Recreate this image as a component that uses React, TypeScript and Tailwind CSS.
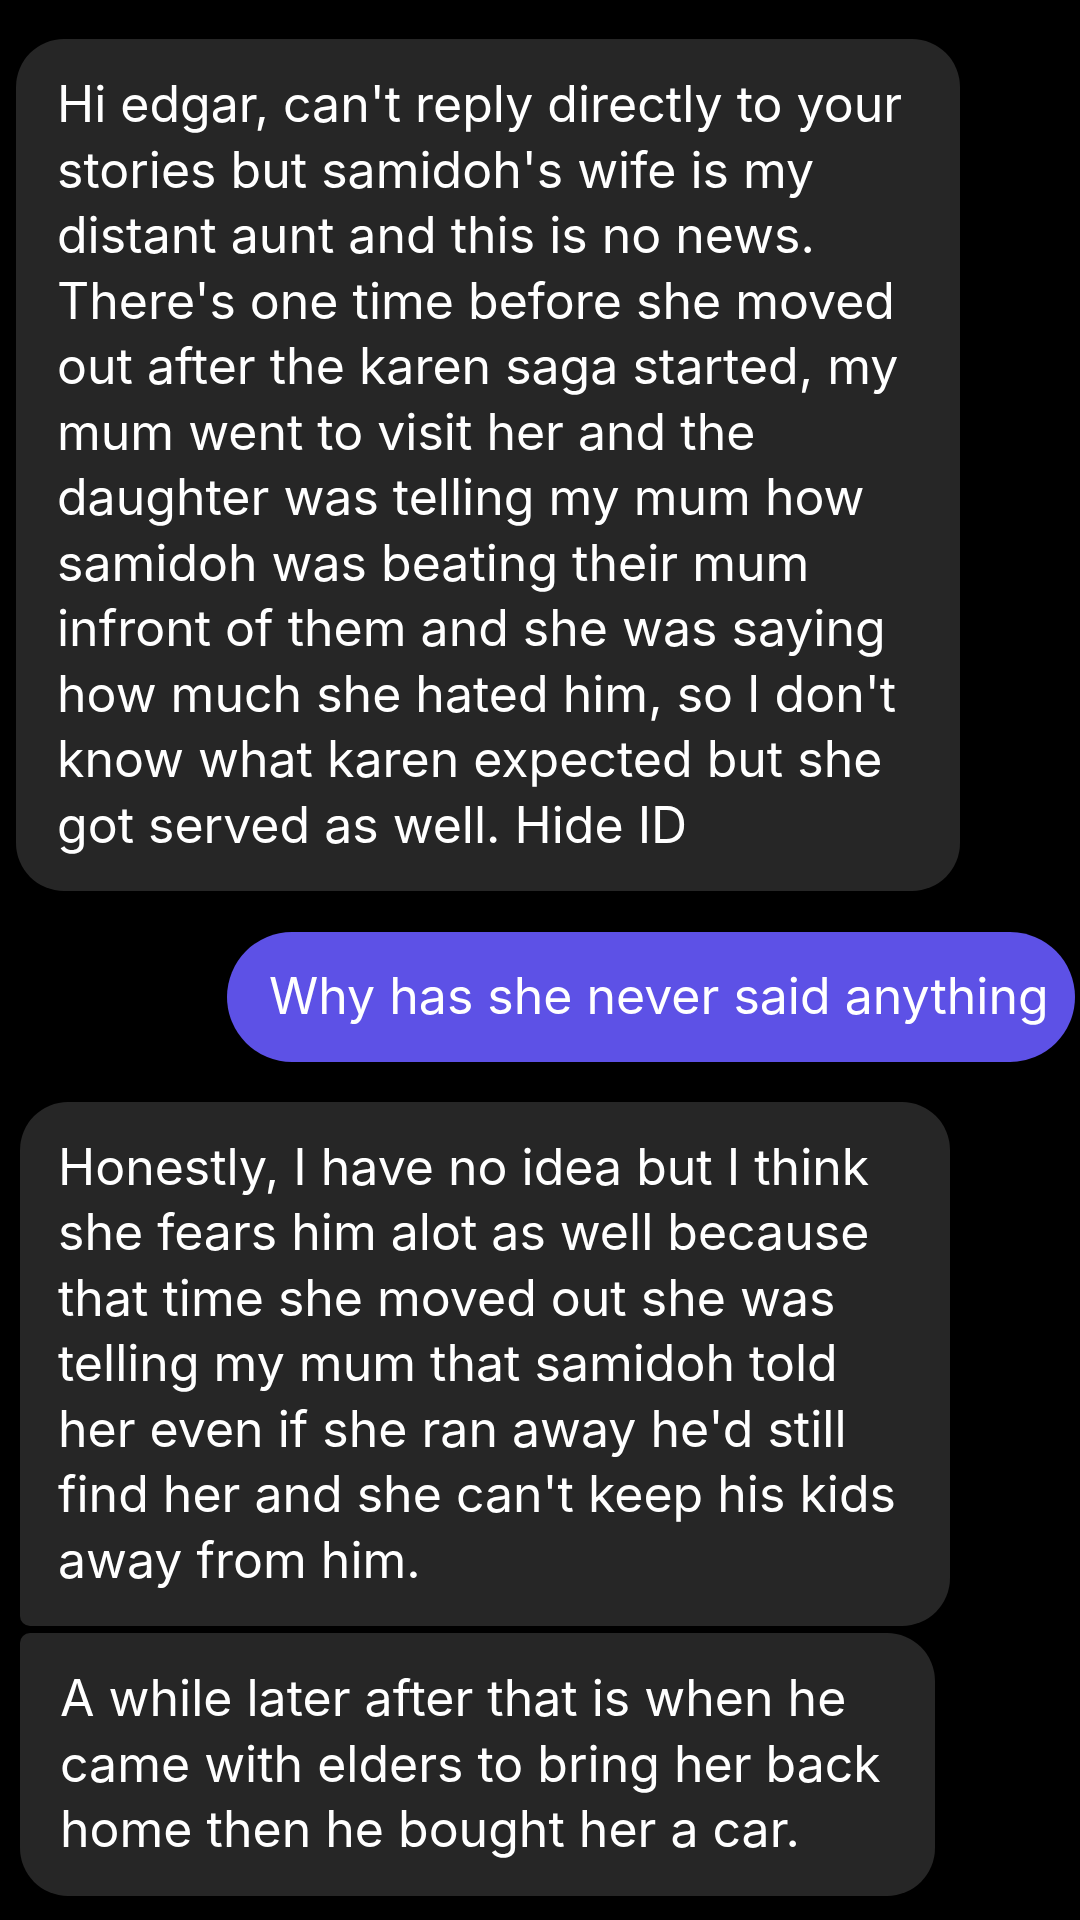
import React from "react";

const font = { fontFamily: "Inter, 'Noto Sans', sans-serif" };

function Lines({ lines }: { lines: string[] }) {
  return (
    <>
      {lines.map((l, i) => (
        <div key={i} className="whitespace-nowrap">
          {l}
        </div>
      ))}
    </>
  );
}

export default function App() {
  const m1 = [
    "Hi edgar, can't reply directly to your",
    "stories but samidoh's wife is my",
    "distant aunt and this is no news.",
    "There's one time before she moved",
    "out after the karen saga started, my",
    "mum went to visit her and the",
    "daughter was telling my mum how",
    "samidoh was beating their mum",
    "infront of them and she was saying",
    "how much she hated him, so I don't",
    "know what karen expected but she",
    "got served as well. Hide ID",
  ];
  const m3 = [
    "Honestly, I have no idea but I think",
    "she fears him alot as well because",
    "that time she moved out she was",
    "telling my mum that samidoh told",
    "her even if she ran away he'd still",
    "find her and she can't keep his kids",
    "away from him.",
  ];
  const m4 = [
    "A while later after that is when he",
    "came with elders to bring her back",
    "home then he bought her a car.",
  ];
  return (
    <div
      className="w-[1080px] h-[1920px] bg-black text-white flex flex-col pt-[39px] overflow-hidden text-[50px] leading-[65.5px] tracking-[0px]"
      style={font}
    >
      <div className="ml-[16px] w-[944px] bg-[#262626] rounded-[48px] pl-[41px] py-[33px]">
        <Lines lines={m1} />
      </div>
      <div className="mt-[41px] ml-[227px] w-[848px] bg-[#5d51e6] rounded-full pl-[42px] py-[32px]">
        <Lines lines={["Why has she never said anything"]} />
      </div>
      <div className="mt-[40px] ml-[20px] w-[930px] bg-[#262626] rounded-[48px] rounded-bl-[10px] pl-[38px] py-[33px]">
        <Lines lines={m3} />
      </div>
      <div className="mt-[7px] ml-[20px] w-[915px] bg-[#262626] rounded-[48px] rounded-tl-[10px] pl-[40px] py-[33px]">
        <Lines lines={m4} />
      </div>
    </div>
  );
}
